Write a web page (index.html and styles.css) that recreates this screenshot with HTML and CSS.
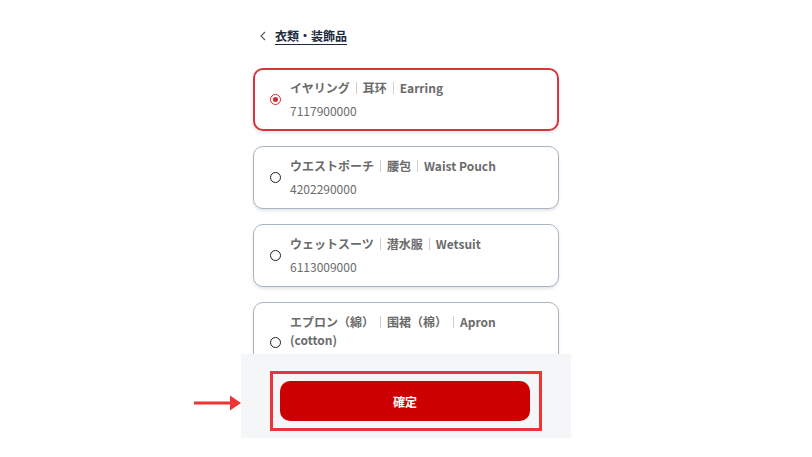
FILE: index.html
```html
<!DOCTYPE html>
<html lang="ja">
<head>
<meta charset="utf-8">
<title>衣類・装飾品</title>
<link rel="stylesheet" href="styles.css">
</head>
<body>
<div class="page">
  <div class="header">
    <svg class="chevron" width="6" height="10" viewBox="0 0 6 10"><polyline points="5,1 1,5 5,9" fill="none" stroke="#555" stroke-width="1.1"/></svg>
    <a class="crumb">衣類・装飾品</a>
  </div>
  <div class="list">
    <div class="card selected">
      <span class="radio on"></span>
      <div class="info">
        <div class="title">イヤリング<span class="sep"></span>耳环<span class="sep"></span>Earring</div>
        <div class="code">7117900000</div>
      </div>
    </div>
    <div class="card">
      <span class="radio"></span>
      <div class="info">
        <div class="title">ウエストポーチ<span class="sep"></span>腰包<span class="sep"></span>Waist Pouch</div>
        <div class="code">4202290000</div>
      </div>
    </div>
    <div class="card">
      <span class="radio"></span>
      <div class="info">
        <div class="title">ウェットスーツ<span class="sep"></span>潜水服<span class="sep"></span>Wetsuit</div>
        <div class="code">6113009000</div>
      </div>
    </div>
    <div class="card">
      <span class="radio"></span>
      <div class="info">
        <div class="title">エプロン（綿）<span class="sep"></span>围裙（棉）<span class="sep"></span>Apron (cotton)</div>
        <div class="code">6211430000</div>
      </div>
    </div>
  </div>
  <div class="footer">
    <svg class="arrow" width="48" height="16" viewBox="0 0 48 16"><line x1="0" y1="8" x2="37" y2="8" stroke="#ee3535" stroke-width="3"/><polygon points="36,0.5 47,8 36,15.5" fill="#ee3535"/></svg>
    <div class="highlight">
      <button class="confirm">確定</button>
    </div>
  </div>
</div>
</body>
</html>
```
FILE: styles.css
```css
html, body {
  margin: 0;
  padding: 0;
  background: #ffffff;
}
body {
  font-family: "Noto Sans CJK JP", "Noto Sans", sans-serif;
  color: #666666;
}
.page {
  width: 330px;
  margin: 0 auto;
  position: relative;
}
.header {
  display: flex;
  align-items: center;
  gap: 9px;
  padding: 27px 0 0 19px;
  height: 18px;
}
.chevron {
  display: block;
}
.crumb {
  font-size: 12px;
  line-height: 18px;
  font-weight: 700;
  color: #1c2b40;
  text-decoration: underline;
  text-underline-offset: 3px;
  text-decoration-thickness: 1px;
}
.list {
  margin-top: 23px;
  padding: 0 12px;
  height: 286px;
  overflow: hidden;
  display: flex;
  flex-direction: column;
  gap: 15px;
}
.card {
  flex: none;
  display: flex;
  align-items: center;
  gap: 9px;
  padding: 10px 30px 10px 16px;
  border: 1px solid #aab5c2;
  border-radius: 10px;
  background: #ffffff;
  box-shadow: 0 2px 3px rgba(40, 50, 70, 0.12);
}
.card.selected {
  border: 2px solid #d7343b;
  padding: 9px 29px 9px 15px;
}
.radio {
  flex: none;
  width: 11px;
  height: 11px;
  box-sizing: border-box;
  border: 1.5px solid #1f1f1f;
  border-radius: 50%;
  display: flex;
  align-items: center;
  justify-content: center;
}
.radio.on {
  border-color: #d52b30;
}
.radio.on::after {
  content: "";
  width: 5px;
  height: 5px;
  border-radius: 50%;
  background: #d52b30;
}
.info {
  min-width: 0;
}
.title {
  font-size: 12px;
  line-height: 18px;
  font-weight: 700;
  color: #6b6b6b;
}
.sep {
  display: inline-block;
  width: 0;
  height: 12px;
  border-left: 1px solid #cfcfcf;
  margin: 0 6px;
  vertical-align: -1px;
}
.code {
  font-size: 12px;
  line-height: 18px;
  margin-top: 5px;
  color: #6b6b6b;
}
.footer {
  position: relative;
  background: #f5f6f8;
  padding: 17px 0 7px;
  display: flex;
  justify-content: center;
}
.arrow {
  position: absolute;
  left: -47px;
  top: 41px;
}
.highlight {
  border: 3px solid #ee3535;
  padding: 7px 9px 7px 7px;
}
.confirm {
  display: block;
  width: 250px;
  height: 40px;
  border: none;
  border-radius: 10px;
  background: #cc0000;
  color: #ffffff;
  font-family: "Noto Sans CJK JP", "Noto Sans", sans-serif;
  font-size: 12px;
  font-weight: 700;
  padding: 0;
}
```
